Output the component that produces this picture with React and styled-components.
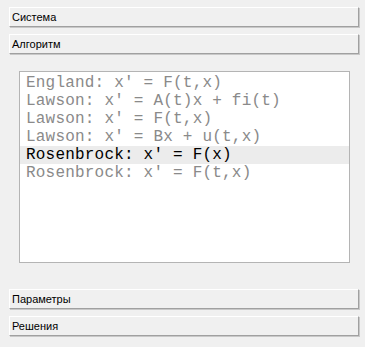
import styled, { createGlobalStyle } from "styled-components";
import { useState } from "react";

const Global = createGlobalStyle`
  html, body { margin: 0; padding: 0; background: #f0f0f0; }
`;

const metodos = [
  "England: x' = F(t,x)",
  "Lawson: x' = A(t)x + fi(t)",
  "Lawson: x' = F(t,x)",
  "Lawson: x' = Bx + u(t,x)",
  "Rosenbrock: x' = F(x)",
  "Rosenbrock: x' = F(t,x)",
];

export default function App() {
  const [sel, setSel] = useState(4);
  return (
    <Page>
      <Global />
      <Bar>Система</Bar>
      <Bar $gap={7}>Алгоритм</Bar>
      <ListBox>
        {metodos.map((m, i) => (
          <Item key={i} $active={i === sel} onClick={() => setSel(i)}>
            {m}
          </Item>
        ))}
      </ListBox>
      <Bar $gap={26}>Параметры</Bar>
      <Bar $gap={7}>Решения</Bar>
    </Page>
  );
}

const Page = styled.div`
  width: 365px;
  height: 347px;
  box-sizing: border-box;
  padding: 7px 6px 0 9px;
  background: #f0f0f0;
  display: flex;
  flex-direction: column;
  font-family: "Liberation Sans", Arial, sans-serif;
`;

const Bar = styled.div`
  height: 20px;
  box-sizing: border-box;
  margin-top: ${({ $gap }) => $gap || 0}px;
  border-top: 1px solid #ffffff;
  border-left: 1px solid #ffffff;
  border-bottom: 1px solid #a0a0a0;
  border-right: 1px solid #a0a0a0;
  box-shadow: 1px 1px 0 #c8c8c8;
  background: #f0f0f0;
  display: flex;
  align-items: center;
  padding-left: 2px;
  font-size: 11px;
  color: #000;
`;

const ListBox = styled.div`
  margin: 17px 9px 0 10px;
  height: 192px;
  box-sizing: border-box;
  border: 1px solid #b4b4b4;
  background: #ffffff;
  padding-top: 2px;
  display: flex;
  flex-direction: column;
`;

const Item = styled.div`
  height: 18px;
  line-height: 18px;
  padding-left: 6px;
  font-family: "Liberation Mono", "Courier New", monospace;
  font-size: 16px;
  letter-spacing: 0.2px;
  white-space: pre;
  cursor: default;
  color: ${({ $active }) => ($active ? "#000000" : "#8a8a8a")};
  background: ${({ $active }) => ($active ? "#ececec" : "transparent")};
`;
